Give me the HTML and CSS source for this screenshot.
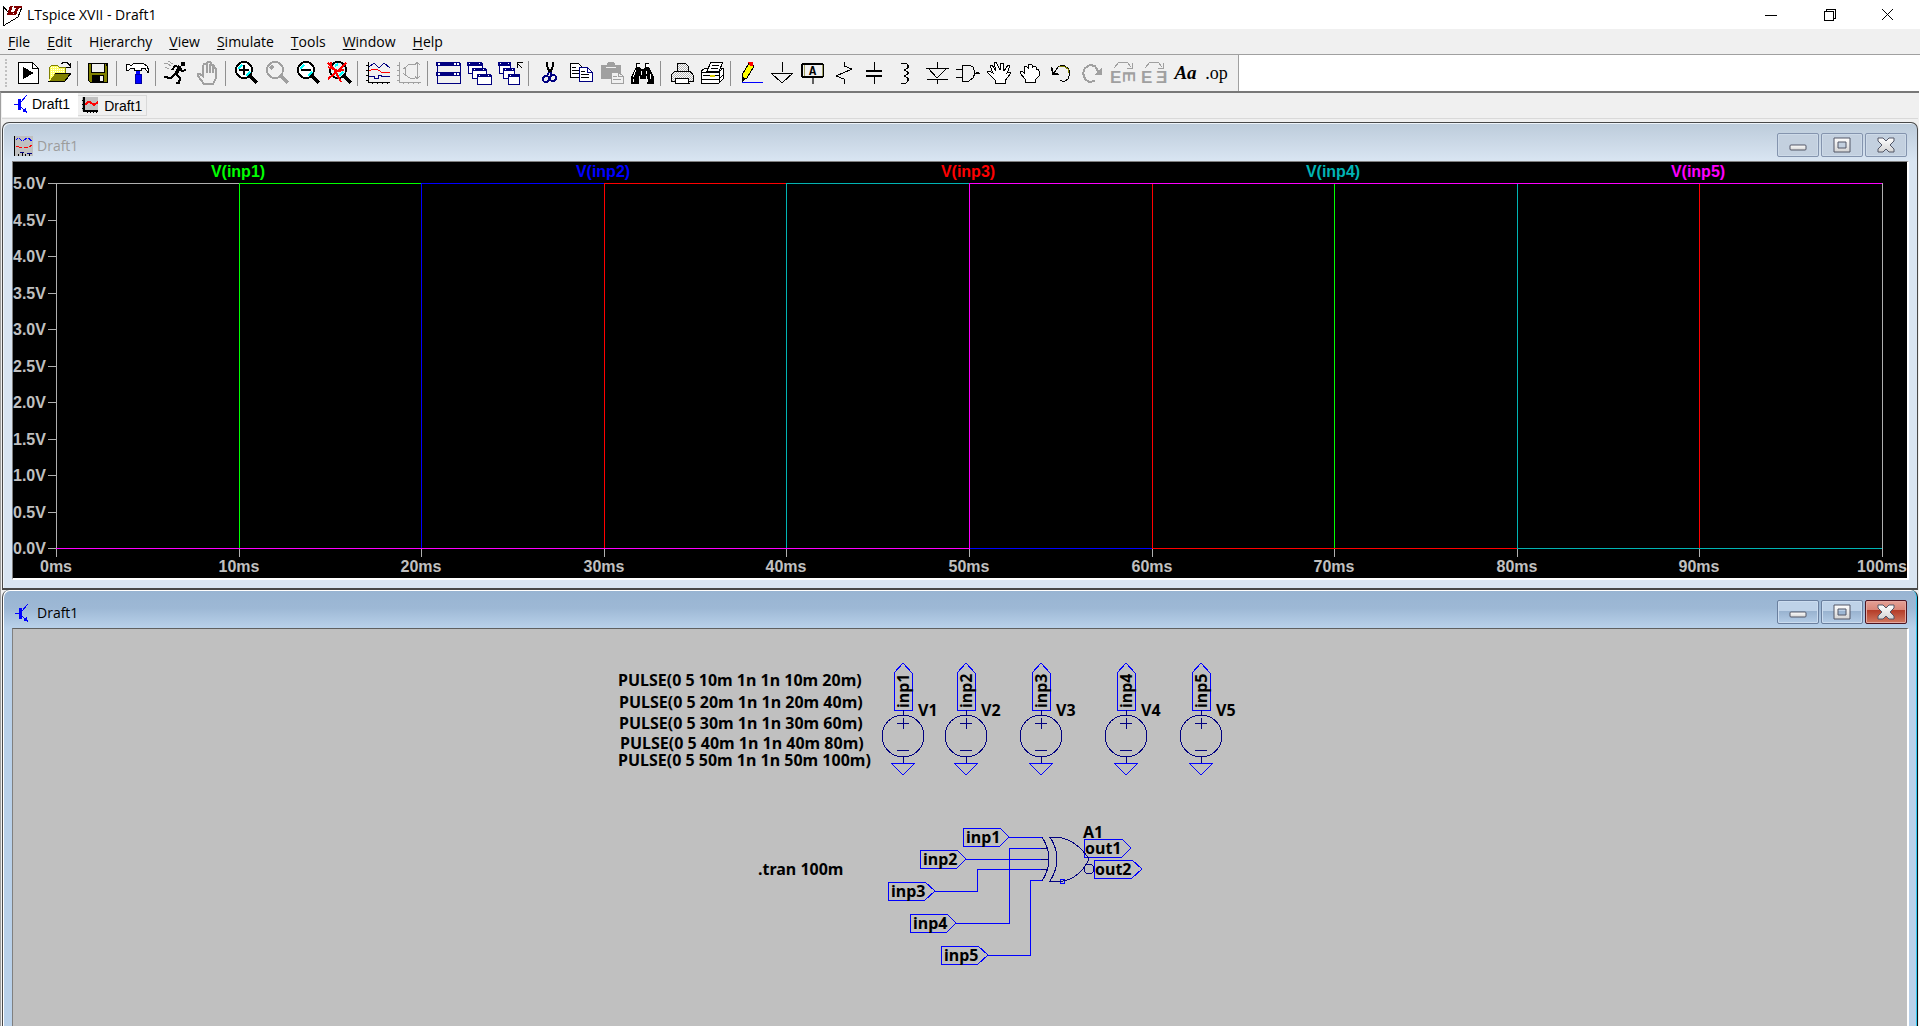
FILE: index.html
```html
<!DOCTYPE html>
<html lang="en">
<head>
<meta charset="utf-8">
<title>LTspice XVII - Draft1</title>
<link rel="stylesheet" href="styles.css">
</head>
<body>
<svg class="defs" aria-hidden="true">
  <defs>
    <linearGradient id="metal" x1="0" y1="0" x2="0" y2="1"><stop offset="0" stop-color="#fff"/><stop offset="1" stop-color="#d4d4d4"/></linearGradient>
    <pattern id="dots" width="2" height="2" patternUnits="userSpaceOnUse"><rect width="2" height="2" fill="#fff"/><path d="M0 0h1v1H0zM1 1h1v1H1z" fill="#b4b4b4"/></pattern>
    <pattern id="yellow" width="2" height="2" patternUnits="userSpaceOnUse"><rect width="2" height="2" fill="#ffff60"/><path d="M0 0h1v1H0z" fill="#fff"/></pattern>
    <symbol id="transistor" viewBox="0 0 20 20"><g fill="none" stroke="#0000ff"><path d="M2 10h5M9 8l6-7M9 13l6 6"/><path d="M7 5v11" stroke-width="3"/></g><path d="M10 17l4-3 1 5z" fill="#0000ff"/></symbol>
    <symbol id="w-min" viewBox="0 0 20 20"><rect x="2" y="10" width="16" height="5" rx="1" fill="url(#metal)" stroke="#535666"/></symbol>
    <symbol id="w-max" viewBox="0 0 20 20"><path fill-rule="evenodd" d="M2 3h16v14H2zM6 7v6h8V7z" fill="url(#metal)" stroke="#535666"/></symbol>
    <symbol id="w-close" viewBox="0 0 20 20"><path d="M2 3h5l3 3 3-3h5v3l-4 4 4 4v3h-5l-3-3-3 3H2v-3l4-4-4-4z" fill="url(#metal)" stroke="#535666"/></symbol>
    <symbol id="source" viewBox="0 0 42 113" overflow="visible">
      <g fill="none" stroke="#0000ff"><path d="M12 47V10l9-10 9 10v37z"/><path d="M9 100h24l-12 12z"/></g>
      <g fill="none" stroke="#000080"><path d="M21 47v5M21 94v6M21 55v11M15 60h12M15 87h12"/><circle cx="21" cy="73" r="21"/></g>
    </symbol>
  </defs>
</svg>

<header class="titlebar">
  <svg class="app-logo" width="20" height="22" viewBox="0 0 20 22"><path d="M1 2v20l15-9 4-10" fill="none" stroke="#000"/><path d="M1 2l5 6" stroke="#000"/><path d="M8 2h3L9 8h3l-1 3H5zM12 2h9l-1 2h-3l-3 7h-3l3-7h-2z" fill="#800000"/></svg>
  <h1>LTspice XVII - Draft1</h1>
  <div class="main-controls">
    <button aria-label="Minimize"><svg width="13" height="13" viewBox="0 0 13 13"><path d="M0 7h12"/></svg></button>
    <button aria-label="Restore"><svg width="13" height="13" viewBox="0 0 13 13"><path d="M1 3h9v9H1zM3 3V1h9v9h-2"/></svg></button>
    <button aria-label="Close"><svg class="smooth" width="13" height="13" viewBox="0 0 13 13"><path d="M1 1l11 11M12 1L1 12"/></svg></button>
  </div>
</header>

<nav class="menubar">
  <button><u>F</u>ile</button><button><u>E</u>dit</button><button>H<u>i</u>erarchy</button><button><u>V</u>iew</button><button><u>S</u>imulate</button><button><u>T</u>ools</button><button><u>W</u>indow</button><button><u>H</u>elp</button>
</nav>

<div class="toolstrip">
<div class="toolbar" role="toolbar" aria-label="Main">
  <span class="grip"></span>
  <button aria-label="New schematic"><svg viewBox="0 0 25 24"><path d="M2 1h14l6 6v15H2z" fill="#fff" stroke="#000"/><path d="M16 1v6h6" fill="none" stroke="#000"/><path d="M7 6l11 6-11 6z"/></svg></button>
  <button aria-label="Open"><svg viewBox="0 0 25 24"><path d="M2 20V7l3-3h5l2 2h6v6" fill="url(#yellow)" stroke="#808000"/><path d="M2 20l6-8h16l-6 8z" fill="#808000" stroke="#000"/><path d="M2 20l6-8" stroke="#ffff60"/><path d="M14 3l3-2h3l3 4M23 2v4h-4" fill="none" stroke="#000"/></svg></button>
  <span class="sep"></span>
  <button aria-label="Save"><svg viewBox="0 0 25 24"><path d="M2 2h19v19H4l-2-2z" fill="#808000" stroke="#000"/><path d="M5 2h13v9H5z" fill="#f0f0f0" stroke="#000"/><path d="M6 14h12v7H6zM20 3h1v2h-1z"/><path d="M14 15h3v5h-3z" fill="#f0f0f0"/></svg></button>
  <span class="sep"></span>
  <button aria-label="Control panel"><svg viewBox="0 0 25 24"><path d="M11 8h4v6h-4z" fill="#0000ff"/><path d="M10 13h6v9h-6z" fill="#0000ff" stroke="#0000a0"/><path d="M1 3h3l2 2 3-3h9l4 3 2 5-1 2-3-5h-4v2H9V7H6L4 9H1z" fill="#fff" stroke="#000"/></svg></button>
  <span class="sep"></span>
  <button aria-label="Run"><svg viewBox="0 0 25 24"><path d="M0 2h3l4 3M4 0l5 3M1 6l4 2" fill="none" stroke="#a0a0a0"/><path d="M17 1h4v4h-4z"/><path d="M16 5l-4 8" stroke="#000" stroke-width="4"/><path d="M15 6l-4-1-3 4M16 7l2 3 4-1M11 13l-4 4-7-1M12 13l4 4-1 5h-3" fill="none" stroke="#000" stroke-width="2"/></svg></button>
  <button aria-label="Halt" disabled><svg viewBox="0 0 25 24"><path d="M8 15V5l1-2h2l1 1V2l1-1h2l1 1v2h2l1 1v2h1l1 1v9l-3 6H9l-6-8v-2h2zM12 4v8M15 3v9M18 5v7" fill="#f0f0f0" stroke="#a0a0a0" stroke-width="2"/></svg></button>
  <span class="sep"></span>
  <button aria-label="Zoom in"><svg viewBox="0 0 25 24"><circle cx="10" cy="9" r="8" fill="#fff" stroke="#000" stroke-width="2"/><path d="M4 8l4-4M12 15l4-4" stroke="#00ffff" stroke-width="2"/><path d="M5 9h10M10 4v10" stroke="#000" stroke-width="2"/><path d="M15 14l8 8" stroke="#000" stroke-width="3"/></svg></button>
  <button aria-label="Pan" disabled><svg viewBox="0 0 25 24"><circle cx="10" cy="9" r="8" fill="none" stroke="#a0a0a0" stroke-width="2"/><path d="M5 8l3-3M15 14l8 8" stroke="#a0a0a0" stroke-width="3"/></svg></button>
  <button aria-label="Zoom out"><svg viewBox="0 0 25 24"><circle cx="10" cy="9" r="8" fill="#fff" stroke="#000" stroke-width="2"/><path d="M4 8l4-4M12 15l4-4" stroke="#00ffff" stroke-width="2"/><path d="M5 9h10" stroke="#000" stroke-width="2"/><path d="M15 14l8 8" stroke="#000" stroke-width="3"/></svg></button>
  <button aria-label="Zoom to fit"><svg viewBox="0 0 25 24"><circle cx="11" cy="9" r="8" fill="#d8f8f8" stroke="#000" stroke-width="2"/><path d="M8 5l3-2M12 15l4-4" stroke="#00ffff" stroke-width="2"/><path d="M16 14l8 8" stroke="#000" stroke-width="3"/><path d="M1 2l6 6 7 13M19 2l-6 6-6 5-6 5M1 6l10 4 6-1M4 1v5" fill="none" stroke="#ff0000" stroke-width="2"/></svg></button>
  <span class="sep"></span>
  <button aria-label="Pick visible traces"><svg viewBox="0 0 25 24"><path d="M2 1v20h22M0 4h2M0 9h2M0 14h2M0 19h2M6 21v2M11 21v2M16 21v2M21 21v2" fill="none" stroke="#000"/><path d="M3 6l5-4 5 5 5-5 6 5" fill="none" stroke="#000080"/><path d="M3 10l4-2h4l4 3 5 1 4-1" fill="none" stroke="#ff0000"/><path d="M3 15h5v2h4v-3h3v1h9" fill="none" stroke="#000080"/></svg></button>
  <button aria-label="Autorange" disabled><svg viewBox="0 0 25 24"><path d="M2 1v20h22M0 4h2M0 9h2M0 14h2M0 19h2M6 21v2M11 21v2M16 21v2M21 21v2M20 1v17M18 4l2-3 3 3M18 15l2 3 3-3M18 3h-6L8 7v7l5 3h5M6 8l3-2M6 12l3 3" fill="none" stroke="#a0a0a0"/></svg></button>
  <span class="sep"></span>
  <button aria-label="Tile windows"><svg viewBox="0 0 25 24"><path d="M1 2h23v20H1z" fill="#f0f0f0" stroke="#000080"/><path d="M0 1h24v4H0zM0 11h24v4H0z" fill="#000080"/><path d="M2 2h2v2H2zM18 2h2v2h-2zM21 2h2v2h-2zM2 12h2v2H2zM18 12h2v2h-2zM21 12h2v2h-2z" fill="#fff"/></svg></button>
  <button aria-label="Cascade windows"><svg viewBox="0 0 25 24"><g fill="#fff" stroke="#000080"><path d="M1 2h14v10H1z"/><path d="M5 8h14v9H5z"/><path d="M10 14h14v9H10z"/></g><path d="M0 1h15v4H0zM5 7h14v3H5zM10 13h14v3H10z" fill="#000080"/><path d="M2 2h1v1H2zM12 2h1v1h-1zM7 8h1v1H7zM16 8h1v1h-1zM12 14h1v1h-1zM21 14h1v1h-1z" fill="#fff"/></svg></button>
  <button aria-label="Close all windows"><svg viewBox="0 0 25 24"><g fill="#fff" stroke="#000080"><path d="M1 2h11v10H1z"/><path d="M5 8h11v9H5z"/><path d="M10 14h11v9H10z"/></g><path d="M0 1h13v4H0zM5 7h12v3H5zM10 13h12v3H10z" fill="#000080"/><path d="M2 2h1v1H2zM10 2h1v1h-1zM7 8h1v1H7zM14 8h1v1h-1zM12 14h1v1h-1z" fill="#fff"/><path d="M19 7V1h6M19 2l5 5" fill="none" stroke="#000"/></svg></button>
  <span class="sep"></span>
  <button aria-label="Cut"><svg viewBox="0 0 25 24"><path d="M10 1v4l3 7M16 1v4l-3 7" fill="none" stroke="#000" stroke-width="2"/><g fill="none" stroke="#000080" stroke-width="2"><path d="M12 11l-2 4M13 11l2 3"/><circle cx="9" cy="18" r="3"/><circle cx="16" cy="17" r="3"/></g></svg></button>
  <button aria-label="Copy"><svg viewBox="0 0 25 24"><path d="M2 2h8l4 4v10H2z" fill="#fff" stroke="#000"/><path d="M4 6h4M4 9h7M4 12h7" stroke="#000"/><path d="M11 6h8l5 5v9H11z" fill="#fff" stroke="#000080"/><path d="M19 6v5h5" fill="none" stroke="#000080"/><path d="M13 10h4M13 13h8M13 16h8" stroke="#000"/></svg></button>
  <button aria-label="Paste" disabled><svg viewBox="0 0 25 24"><path d="M2 4h6V2l2-1h4l2 1v2h6v14H2z" fill="#a0a0a0"/><path d="M7 6h10" stroke="#f0f0f0"/><path d="M12 11h7l5 4v7H12z" fill="#f0f0f0" stroke="#a0a0a0"/><path d="M14 15h4M14 18h8M19 11v4h5" fill="none" stroke="#a0a0a0"/></svg></button>
  <button aria-label="Find"><svg viewBox="0 0 25 24"><path d="M6 2h4v4l1 2h3l1-2V2h4v4l5 10v7h-7v-8h-1v3h-6v-3h-1v8H1v-7L6 6z"/><path d="M7 3h2v2H7zM16 3h2v2h-2zM6 9l-3 7M11 10v4M16 10v3M20 13l1 5M3 18v3M17 18v3" stroke="#fff" fill="#fff"/></svg></button>
  <span class="sep"></span>
  <button aria-label="Print"><svg viewBox="0 0 25 24"><path d="M8 10V2h8l3 3v5" fill="url(#dots)" stroke="#000"/><path d="M6 10h15l3 4v6H2v-6z" fill="url(#dots)" stroke="#000"/><path d="M6 17h13l1 5H6z" fill="#fff" stroke="#000"/></svg></button>
  <button aria-label="Print setup"><svg viewBox="0 0 25 24"><path d="M1 10l5-3h17v11l-4 4H1z" fill="#fff" stroke="#000"/><path d="M7 10l4-9h12l-4 9z" fill="#fff" stroke="#000"/><path d="M12 4h7M11 7h7M1 11h18l4-4M1 18h18l4-4M19 11v11M3 14h16" fill="none" stroke="#000"/><path d="M10 15h5" stroke="#e0d000" stroke-width="2"/></svg></button>
  <span class="sep"></span>
  <button aria-label="Draw wire"><svg viewBox="0 0 25 24"><path d="M3 20v-6l7-12 5 3-7 12z" fill="#ffff00" stroke="#000"/><path d="M9 1h5v4h-3z" fill="#ff0000"/><path d="M3 15l4 3-4 3z"/><path d="M3 21h21" stroke="#0000ff"/></svg></button>
  <button aria-label="Ground"><svg viewBox="0 0 25 24"><path d="M12 1v10M1 12h22L12 22z" fill="none" stroke="#000"/></svg></button>
  <button aria-label="Label net"><svg viewBox="0 0 25 24"><path d="M12 16v7" stroke="#606060" stroke-width="2"/><rect x="1" y="3" width="21" height="13" rx="2" fill="#f0f0f0" stroke="#000" stroke-width="2"/><path d="M3 4v11M21 4v11" stroke="#a0a060"/><text x="8" y="14" class="glyph-a">A</text></svg></button>
  <button aria-label="Resistor"><svg viewBox="0 0 25 24"><path d="M12 1v4l8 3-16 7 8 3v5" fill="none" stroke="#000"/></svg></button>
  <button aria-label="Capacitor"><svg viewBox="0 0 25 24"><path d="M11 1v9M11 15v8" stroke="#000"/><path d="M3 10h16M3 15h16" stroke="#000" stroke-width="2"/></svg></button>
  <button aria-label="Inductor"><svg viewBox="0 0 25 24"><path d="M7 2h5l2 2v3l-4 2 4 2v2l-4 2 4 2v3l-2 2H7" fill="none" stroke="#000" stroke-width="1"/><path d="M14 4v3M14 11v2M14 17v3" stroke="#000" stroke-width="2"/></svg></button>
  <button aria-label="Diode"><svg viewBox="0 0 25 24"><path d="M1 7h23M2 18h21M12 1v6M12 18v5M3 7l9 10 10-10" fill="none" stroke="#000"/></svg></button>
  <button aria-label="Component"><svg viewBox="0 0 25 24"><path d="M0 8h6M0 16h6M19 12h5M6 4h7l4 2 2 6-2 5-4 3H6z" fill="#f0f0f0" stroke="#000" stroke-width="1"/><path d="M20 12h3" stroke="#000" stroke-width="2"/></svg></button>
  <button aria-label="Move"><svg viewBox="0 0 25 24"><path d="M8 22v-3l-8-8 2-1 4 2-3-7 2-1 4 6-2-8 2-1 4 8 1-7h2l1 8 4-6 2 1-3 7 3-1 1 1-6 8v2z" fill="#fff" stroke="#000"/></svg></button>
  <button aria-label="Drag"><svg viewBox="0 0 25 24"><path d="M7 21v-3l-5-6v-2h2l2 2V6l2-1 2 2V4l2-1 2 1v3l1-2 3 1v3l2-1 1 2v5l-4 4v2z" fill="#fff" stroke="#000"/></svg></button>
  <button aria-label="Undo"><svg viewBox="0 0 25 24"><path d="M5 12l4-6 5-2 5 3 2 5-2 6-4 3-4-2" fill="none" stroke="#000"/><path d="M10 5h5l4 3 1 4" fill="none" stroke="#808000"/><path d="M2 6l2 1v4l6 2v1H3z"/></svg></button>
  <button aria-label="Redo" disabled><svg viewBox="0 0 25 24"><path d="M19 12l-4-7-5-1-5 3-2 5 2 6 4 3 6-1" fill="none" stroke="#a0a0a0" stroke-width="2"/><path d="M22 6v8h-8z" fill="#a0a0a0"/></svg></button>
  <button aria-label="Rotate" disabled><svg viewBox="0 0 25 24"><path d="M3 7l5-6h8l4 5M21 2v5h-5" fill="none" stroke="#a0a0a0"/><text x="-1" y="22" class="glyph-e">E</text><text class="glyph-e" transform="translate(12 10) rotate(90)">E</text></svg></button>
  <button aria-label="Mirror" disabled><svg viewBox="0 0 25 24"><path d="M3 7l5-6h8l4 5M21 2v5h-5" fill="none" stroke="#a0a0a0"/><text x="-1" y="22" class="glyph-e">E</text><text x="14" y="22" class="glyph-e">Ǝ</text></svg></button>
  <button aria-label="Text" class="type">Aa</button>
  <button aria-label="SPICE directive" class="directive">.op</button>
</div>
</div>

<main class="workspace">
  <div class="tabs" role="tablist">
    <button role="tab" class="tab active" aria-selected="true"><svg width="20" height="20"><use href="#transistor"/></svg>Draft1</button>
    <button role="tab" class="tab" aria-selected="false"><svg width="16" height="17" viewBox="0 0 16 17"><path d="M0 0h16v14H0z" fill="#c0c0c0"/><path d="M2 0v14h14" fill="none" stroke="#000" stroke-width="2"/><path d="M0 3h2M0 7h2M0 11h2M5 14v2M8 14v2M11 14v2M14 14v2" stroke="#000"/><path d="M3 8l3-3h2l4 3 4-3" fill="none" stroke="#ff0000" stroke-width="2"/></svg>Draft1</button>
  </div>

  <section class="window">
    <header class="caption">
      <svg width="20" height="20" viewBox="0 0 20 20"><path d="M2 0h18v20H2z" fill="#c0c0c0"/><path d="M1 0v20" stroke="#000" stroke-width="1"/><path d="M5 18v2M9 17v3M12 18v2M16 18v2" stroke="#000"/><path d="M3 4l2-2M6 2l3 3M10 5l4-3M15 2l4 3" stroke="#0000ff"/><path d="M3 10l6 2M11 11h4M16 11l3-2" stroke="#ff0000"/><path d="M7 16h4M14 17h5" stroke="#000080"/></svg>
      <h2>Draft1</h2>
      <div class="controls"><button aria-label="Minimize plot"><svg><use href="#w-min"/></svg></button><button aria-label="Maximize plot"><svg><use href="#w-max"/></svg></button><button aria-label="Close plot"><svg><use href="#w-close"/></svg></button></div>
    </header>
    <div class="client plot">
      <svg viewBox="13 162 1894 416" role="img" aria-label="Transient waveforms of inp1 to inp5">
        <g class="trace">
          <path d="M48 183h191M48 220h8M48 256h8M48 293h8M48 329h8M48 366h8M48 402h8M48 439h8M48 475h8M48 512h8M48 548h8M56 183v374M1882 183v374M239 548v9M421 548v9M604 548v9M786 548v9M969 548v9M1152 548v9M1334 548v9M1517 548v9M1699 548v9" stroke="#b0b0b0"/>
          <path d="M239 548V183h182M1334 183v365" stroke="#00ff00"/>
          <path d="M421 548V183h183M969 548h183" stroke="#0000ff"/>
          <path d="M604 548V183h182M1152 183v365h365M1699 183v365" stroke="#ff0000"/>
          <path d="M786 548V183h183M1517 183v365h365" stroke="#00b4b4"/>
          <path d="M56 548h913V183h913" stroke="#ff00ff"/>
        </g>
        <g class="names"><text x="238" y="177" fill="#00ff00">V(inp1)</text><text x="603" y="177" fill="#0000ff">V(inp2)</text><text x="968" y="177" fill="#ff0000">V(inp3)</text><text x="1333" y="177" fill="#00b4b4">V(inp4)</text><text x="1698" y="177" fill="#ff00ff">V(inp5)</text></g>
        <g class="volts"><text x="13" y="189">5.0V</text><text x="13" y="226">4.5V</text><text x="13" y="262">4.0V</text><text x="13" y="299">3.5V</text><text x="13" y="335">3.0V</text><text x="13" y="372">2.5V</text><text x="13" y="408">2.0V</text><text x="13" y="445">1.5V</text><text x="13" y="481">1.0V</text><text x="13" y="518">0.5V</text><text x="13" y="554">0.0V</text></g>
        <g class="times"><text x="56" y="572">0ms</text><text x="239" y="572">10ms</text><text x="421" y="572">20ms</text><text x="604" y="572">30ms</text><text x="786" y="572">40ms</text><text x="969" y="572">50ms</text><text x="1152" y="572">60ms</text><text x="1334" y="572">70ms</text><text x="1517" y="572">80ms</text><text x="1699" y="572">90ms</text><text x="1882" y="572">100ms</text></g>
      </svg>
    </div>
  </section>

  <section class="window focused">
    <header class="caption">
      <svg width="20" height="20"><use href="#transistor"/></svg>
      <h2>Draft1</h2>
      <div class="controls"><button aria-label="Minimize schematic"><svg><use href="#w-min"/></svg></button><button aria-label="Maximize schematic"><svg><use href="#w-max"/></svg></button><button aria-label="Close schematic" class="close"><svg><use href="#w-close"/></svg></button></div>
    </header>
    <div class="client schematic">
      <svg viewBox="13 629 1894 396" role="img" aria-label="Schematic with five pulse sources and an XOR gate">
        <text x="618" y="686">PULSE(0 5 10m 1n 1n 10m 20m)</text>
        <text x="619" y="708">PULSE(0 5 20m 1n 1n 20m 40m)</text>
        <text x="619" y="729">PULSE(0 5 30m 1n 1n 30m 60m)</text>
        <text x="620" y="749">PULSE(0 5 40m 1n 1n 40m 80m)</text>
        <text x="618" y="766">PULSE(0 5 50m 1n 1n 50m 100m)</text>
        <text x="758" y="875">.tran 100m</text>
        <g class="lines">
          <use href="#source" x="882" y="663" width="42" height="113"/>
          <use href="#source" x="945" y="663" width="42" height="113"/>
          <use href="#source" x="1020" y="663" width="42" height="113"/>
          <use href="#source" x="1105" y="663" width="42" height="113"/>
          <use href="#source" x="1180" y="663" width="42" height="113"/>
        </g>
        <text transform="translate(909 708) rotate(-90)">inp1</text><text x="918" y="716">V1</text>
        <text transform="translate(972 708) rotate(-90)">inp2</text><text x="981" y="716">V2</text>
        <text transform="translate(1047 708) rotate(-90)">inp3</text><text x="1056" y="716">V3</text>
        <text transform="translate(1132 708) rotate(-90)">inp4</text><text x="1141" y="716">V4</text>
        <text transform="translate(1207 708) rotate(-90)">inp5</text><text x="1216" y="716">V5</text>
        <g class="lines" fill="none" stroke="#0000ff">
          <path d="M963 828h37l9 9-9 9h-37zM920 850h37l9 9-9 9h-37zM888 882h37l10 9-10 9h-37zM910 914h37l9 9-9 9h-37zM941 946h37l10 9-10 9h-37z"/>
          <path d="M1009 837h34M966 859h83M935 891h42v-22h70M956 923h53v-75h38M988 955h42v-75h12"/>
          <path d="M1084 839h38l9 9-9 9h-38zM1094 860h38l10 9-10 9h-38zM1060 879h4v4h-4z"/>
          <g stroke="#000080"><path d="M1042 837q14 22 0 44M1050 837q14 22 0 44M1049 837h7q20 2 33 22-9 19-26 22h-14"/><path d="M1041 848h6M1041 859h8M1041 869h7"/><circle cx="1089" cy="869" r="5"/></g>
        </g>
        <text x="966" y="843">inp1</text><text x="923" y="865">inp2</text><text x="891" y="897">inp3</text><text x="913" y="929">inp4</text><text x="944" y="961">inp5</text>
        <text x="1083" y="838">A1</text><text x="1085" y="854">out1</text><text x="1095" y="875">out2</text>
      </svg>
    </div>
  </section>
</main>
</body>
</html>
```
FILE: styles.css
```css
* { box-sizing: border-box; }

body {
  margin: 0;
  height: 100vh;
  display: flex;
  flex-direction: column;
  overflow: hidden;
  background: #fff;
  color: #000;
  font: 14px/20px "Open Sans", "Noto Sans", sans-serif;
}

button {
  margin: 0;
  padding: 0;
  border: 0;
  background: none;
  color: inherit;
  font: inherit;
}

h1, h2 {
  margin: 0;
  font-size: 14px;
  font-weight: 400;
}

.defs { position: absolute; width: 0; height: 0; }

/* Application title bar */
.titlebar {
  flex: none;
  display: flex;
  align-items: center;
  gap: 5px;
  height: 29px;
  padding: 0 4px 0 2px;
}

.app-logo, .main-controls svg { shape-rendering: crispEdges; }
.main-controls { display: flex; margin-left: auto; }
.main-controls button { display: grid; place-items: center; width: 58px; height: 29px; }
.main-controls svg { fill: none; stroke: #000; }
.main-controls .smooth { shape-rendering: auto; }

/* Menu bar */
.menubar {
  flex: none;
  display: flex;
  gap: 1px;
  height: 26px;
  background: #f0f0f0;
  border-bottom: 1px solid #a0a0a0;
}

.menubar button { padding: 0 8px; }
.menubar u { text-underline-offset: 2px; }

/* Toolbar */
.toolstrip { flex: none; display: flex; height: 36px; background: #fff; }

.toolbar {
  display: flex;
  align-items: center;
  padding-right: 6px;
  border-right: 1px solid #a0a0a0;
  background: #f0f0f0;
}

.toolbar button { width: 31px; height: 36px; padding: 0 3px; }
.toolbar svg { display: block; width: 25px; height: 24px; overflow: visible; shape-rendering: crispEdges; }
.grip { width: 13px; height: 28px; padding: 0; border-left: 2px dotted #c0c0c0; margin: 0 -5px 0 5px; }
.sep { flex: none; width: 8px; height: 25px; background: linear-gradient(#909090, #909090) 2px 0 / 1px 100% no-repeat; }

.glyph-a { font: bold 12px "Liberation Mono", monospace; }
.glyph-e { font: bold 17px "Liberation Sans", "DejaVu Sans", sans-serif; fill: #a0a0a0; }
.toolbar .type { font: italic bold 19px "Liberation Serif", serif; }
.toolbar .directive { font: 18px "Liberation Serif", serif; }

/* Document area */
.workspace {
  flex: 1;
  min-height: 0;
  display: flex;
  flex-direction: column;
  margin-right: 1px;
  padding: 0 1px;
  border-top: 2px solid #787878;
  border-left: 1px solid #a0a0a0;
  background: #f0f0f0;
}

.tabs {
  flex: none;
  display: flex;
  align-items: flex-start;
  height: 26px;
  margin-bottom: 3px;
  border-bottom: 1px solid #d9d9d9;
  font-family: "Liberation Sans", Arial, sans-serif;
}

.tab {
  display: flex;
  align-items: center;
  gap: 6px;
  height: 21px;
  margin-top: 2px;
  padding: 0 4px;
  border: 1px solid #d9d9d9;
  border-left: 0;
}

.tab.active { gap: 0; height: 24px; margin-top: 0; padding: 0 8px 2px 10px; border: 0; background: #fff; }
.tab svg { shape-rendering: crispEdges; }

/* Document windows */
.window {
  flex: none;
  display: flex;
  flex-direction: column;
  padding: 0 8px 8px 9px;
  border: 1px solid #484848;
  border-bottom-width: 2px;
  border-radius: 7px 7px 0 0;
  background: linear-gradient(#bccbda, #d9e5f2 38px);
  box-shadow: inset 1px 1px #eef4fa;
}

.window.focused {
  flex: 1;
  padding-bottom: 0;
  border-width: 0 1px;
  border-right-color: #101010;
  background: linear-gradient(#98b4d2, #9db8d5 18px, #b9d1ea 38px);
  box-shadow: inset 1px 1px #fff, inset -1px 0 #30c8f0;
}

.caption { flex: none; display: flex; align-items: center; gap: 4px; height: 38px; padding: 7px 2px 0 1px; }
.caption > svg { shape-rendering: crispEdges; }
.caption h2 { color: #9c9c9c; }
.focused .caption h2 { color: #000; }

.controls { display: flex; gap: 2px; margin-left: auto; align-self: flex-start; padding-top: 3px; }

.controls button {
  display: grid;
  place-items: center;
  width: 42px;
  height: 24px;
  border: 1px solid #8494ae;
  border-radius: 2px;
  background: #c3d0df;
  box-shadow: inset 0 0 0 1px #cddae8;
}

.controls svg { width: 20px; height: 20px; }
.focused .controls button { border-color: #6a7f9e; background: linear-gradient(#bed2e8 45%, #98b2cf 45%, #b4cce6); box-shadow: inset 0 0 0 1px #cbdcef; }
.focused .controls .close { border-color: #4c1320; background: linear-gradient(#e4a096, #d88476 42%, #b43c28 42%, #d07860); box-shadow: inset 0 0 0 1px #e4a8a0; }

.client { border: 1px solid #808080; border-right: 2px solid #fff; border-bottom: 2px solid #fff; }
.client svg { display: block; width: 100%; height: auto; }

.plot { background: #000; }
.plot text { font: bold 16px "Liberation Sans", Arial, sans-serif; }
.trace { fill: none; shape-rendering: crispEdges; }
.names, .times { text-anchor: middle; }
.volts, .times { fill: #c0c0c0; }

.schematic { flex: 1; min-height: 0; border-top-color: #606060; border-bottom: 0; background: #c0c0c0; }
.schematic text { font: bold 16px "Noto Sans", "Open Sans", sans-serif; }
.lines { shape-rendering: crispEdges; }
```
